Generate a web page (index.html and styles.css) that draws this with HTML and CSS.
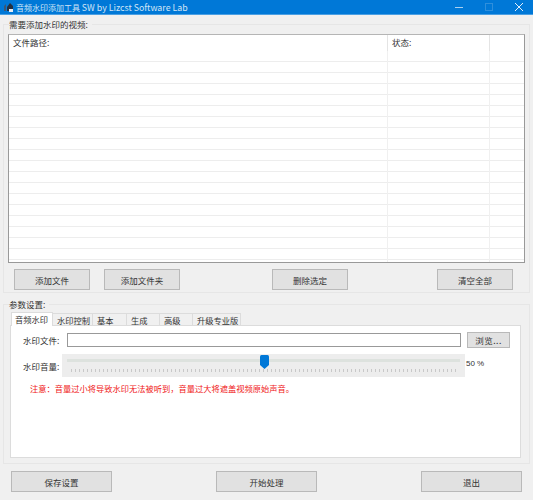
FILE: index.html
```html
<!DOCTYPE html>
<html lang="zh-CN">
<head>
  <meta charset="UTF-8">
  <title>音频水印添加工具</title>
  <link rel="stylesheet" href="styles.css">
</head>
<body>
  <header class="titlebar">
    <svg class="app-icon" width="12" height="12" viewBox="0 0 12 12">
      <path d="M1 5l2-2v7H1z" fill="#3a5878"/>
      <path d="M4 6l3-4 3 3v5H4z" fill="#26303f"/>
      <path d="M6 8h4v3H6z" fill="#e8edf3"/>
    </svg>
    <span class="title-text">音频水印添加工具 <span class="title-latin">SW by Lizcst Software Lab</span></span>
    <div class="window-btns">
      <svg width="8" height="8" viewBox="0 0 8 8"><path d="M0 4.500h8" stroke="#a9d0f0" stroke-width="1"/></svg>
      <svg width="8" height="8" viewBox="0 0 8 8"><rect x=".5" y=".5" width="7" height="7" fill="none" stroke="#2f8fdc"/></svg>
      <svg width="8" height="8" viewBox="0 0 8 8"><path d="M0 0l8 8M8 0l-8 8" stroke="#e3effa" stroke-width="1"/></svg>
    </div>
  </header>

  <section class="group group-files">
    <h3 class="group-label">需要添加水印的视频:</h3>
    <div class="file-list">
      <div class="list-head">
        <div class="col col-path">文件路径:</div>
        <div class="col col-status">状态:</div>
        <div class="col col-extra"></div>
      </div>
      <div class="list-rows">
        <div class="cols-lines"></div>
      </div>
    </div>
    <div class="btn-row">
      <button class="btn">添加文件</button>
      <button class="btn">添加文件夹</button>
      <button class="btn">删除选定</button>
      <button class="btn">清空全部</button>
    </div>
  </section>

  <section class="group group-params">
    <h3 class="group-label">参数设置:</h3>
    <div class="tabs">
      <div class="tab active">音频水印</div>
      <div class="tab">水印控制</div>
      <div class="tab">基本</div>
      <div class="tab">生成</div>
      <div class="tab">高级</div>
      <div class="tab">升级专业版</div>
    </div>
    <div class="tab-panel">
      <div class="field-row">
        <label class="field-label">水印文件:</label>
        <input class="file-input" type="text">
        <button class="btn browse">浏览...</button>
      </div>
      <div class="slider-row">
        <label class="field-label">水印音量:</label>
        <div class="slider">
          <div class="track"></div>
          <svg class="thumb" width="9" height="14" viewBox="0 0 9 14"><path d="M0 1.500Q0 0 1.500 0h6Q9 0 9 1.500V10l-4.500 4L0 10z" fill="#0078d7"/></svg>
          <div class="ticks"></div>
        </div>
        <span class="percent">50 %</span>
      </div>
      <p class="note">注意：音量过小将导致水印无法被听到，音量过大将遮盖视频原始声音。</p>
    </div>
  </section>

  <footer class="footer">
    <button class="btn big">保存设置</button>
    <button class="btn big">开始处理</button>
    <button class="btn big">退出</button>
  </footer>
</body>
</html>
```

FILE: styles.css
```css
html, body {
  height: 500px;
  overflow: hidden;
}
body {
  margin: 0;
  width: 533px;
  background-color: #f0f0f0;
  font-family: "Noto Sans CJK SC", "Liberation Sans", sans-serif;
  font-size: 8.5px;
  color: #333;
}
.titlebar {
  height: 14px;
  background-color: #0078d7;
  color: #cfe4f6;
  display: flex;
  align-items: center;
  padding-left: 3px;
  font-size: 8px;
  border-bottom: 1px solid #4a9fe3;
}
.app-icon {
  margin-right: 1px;
}
.title-text {
  white-space: nowrap;
}
.title-latin {
  font-size: 8.8px;
}
.window-btns {
  margin-left: auto;
  display: flex;
  gap: 22px;
  padding-right: 10px;
}
.group {
  border: 1px solid #e6e6e6;
  margin: 9px 3px 0 3px;
  position: relative;
}
.group-label {
  position: absolute;
  top: -7px;
  left: 5px;
  margin: 0;
  padding-right: 4px;
  background-color: #f0f0f0;
  font-size: 8.5px;
  font-weight: normal;
  line-height: 12px;
}
.group-files {
  height: 269px;
  padding: 9px 4px 0 4px;
  box-sizing: border-box;
}
.file-list {
  height: 229px;
  box-sizing: border-box;
  background-color: white;
  border: 1px solid #999;
  border-top-color: #b5b5b5;
  display: flex;
  flex-direction: column;
}
.list-head {
  display: flex;
  height: 16px;
  flex-shrink: 0;
  line-height: 15px;
}
.col {
  box-sizing: border-box;
  padding-left: 4px;
  border-right: 1px solid #e4e4e4;
}
.col-path { width: 379px; }
.col-status { width: 102px; }
.col-extra { flex: 1; border-right: none; }
.list-rows {
  flex: 1;
  position: relative;
  background-image: repeating-linear-gradient(to bottom, white 0, white 10px, #ededed 10px, #ededed 11px);
}
.cols-lines {
  height: 100%;
  width: 481px;
  box-sizing: border-box;
  border-right: 1px solid #f0f0f0;
  background: linear-gradient(#f0f0f0, #f0f0f0) 378px 0 / 1px 100% no-repeat;
}
.btn {
  background-color: #e1e1e1;
  border: 1px solid #b9b9b9;
  font-family: inherit;
  font-size: 8.5px;
  color: #333;
  padding: 0;
}
.btn-row {
  display: flex;
  padding: 6px 0 0 6px;
}
.btn-row .btn {
  width: 76px;
  height: 21px;
}
.btn-row .btn:nth-child(2) {
  margin-left: 14px;
}
.btn-row .btn:nth-child(3) {
  margin-left: 92px;
}
.btn-row .btn:nth-child(4) {
  margin-left: 89px;
}
.group-params {
  margin-top: 11px;
  height: 160px;
  box-sizing: border-box;
  padding: 7px 8px 0 6px;
}
.tabs {
  display: flex;
  height: 13px;
  align-items: flex-end;
  padding-left: 1px;
  font-size: 8.25px;
}
.tab {
  height: 12px;
  line-height: 12px;
  box-sizing: border-box;
  padding-left: 4px;
  background-color: #f0f0f0;
  border: 1px solid #dcdcdc;
  border-bottom: none;
  border-left: none;
  white-space: nowrap;
}
.tab.active {
  height: 14px;
  background-color: white;
  width: 42px;
  margin-bottom: -1px;
  border-left: 1px solid #dcdcdc;
  position: relative;
  padding-left: 3px;
}
.tab:nth-child(2) { width: 40px; }
.tab:nth-child(3) { width: 34px; }
.tab:nth-child(4) { width: 33px; }
.tab:nth-child(5) { width: 33px; }
.tab:nth-child(6) { width: 48px; }
.tab-panel {
  height: 133px;
  box-sizing: border-box;
  background-color: white;
  border: 1px solid #dcdcdc;
  padding: 6px 10px 0 12px;
}
.field-row, .slider-row {
  display: flex;
  align-items: center;
}
.field-label {
  width: 44px;
  flex-shrink: 0;
}
.file-input {
  width: 394px;
  height: 14px;
  box-sizing: border-box;
  margin: 0;
  background-color: white;
  border: 1px solid #999;
}
.browse {
  width: 43px;
  height: 16px;
  margin-left: 6px;
  letter-spacing: 0.5px;
}
.slider-row {
  margin-top: 6px;
}
.slider-row .field-label {
  width: 39px;
}
.slider {
  width: 403px;
  height: 23px;
  background-color: #ededed;
  position: relative;
  flex-shrink: 0;
}
.track {
  position: absolute;
  left: 5px;
  right: 5px;
  top: 5px;
  height: 3px;
  background-color: #dde2de;
}
.thumb {
  position: absolute;
  left: 198px;
  top: 1px;
}
.ticks {
  position: absolute;
  left: 9px;
  right: 9px;
  top: 15px;
  height: 3px;
  background-image: repeating-linear-gradient(to right, #c8c8c8 0, #c8c8c8 1px, transparent 1px, transparent 4px);
}
.percent {
  margin-left: 1px;
  margin-top: -5px;
  font-family: "Liberation Sans", sans-serif;
  font-size: 8px;
  white-space: nowrap;
}
.note {
  margin: 5px 0 0 7px;
  color: #f01818;
  font-size: 8.25px;
  line-height: 12px;
  white-space: nowrap;
}
.footer {
  display: flex;
  justify-content: space-between;
  padding: 7px 11px 0 11px;
}
.big {
  width: 101px;
  height: 21px;
}
```
